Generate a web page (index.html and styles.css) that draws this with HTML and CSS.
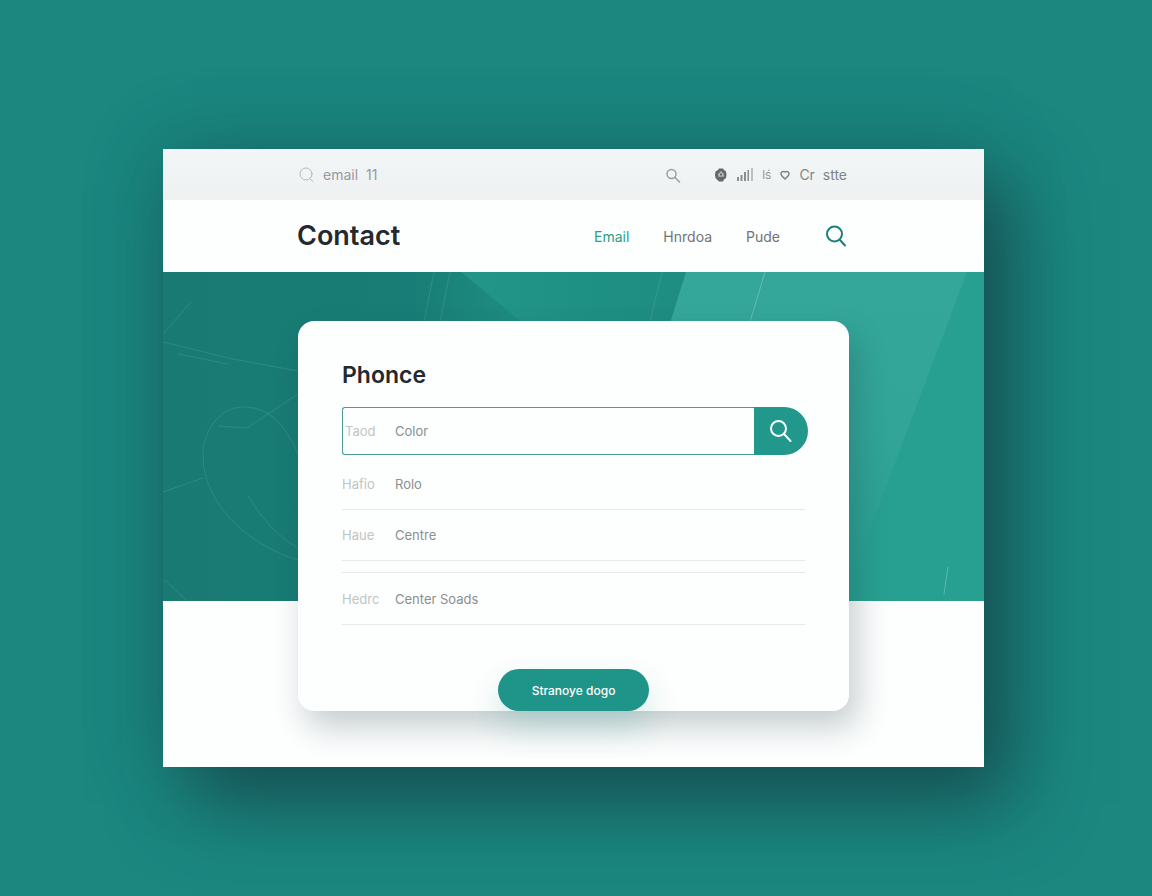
FILE: index.html
```html
<!DOCTYPE html>
<html lang="en">
<head>
  <meta charset="UTF-8">
  <meta name="viewport" content="width=device-width, initial-scale=1">
  <title>Contact</title>
  <link rel="stylesheet" href="styles.css">
</head>
<body>

  <div class="page">

    <div class="topbar">
      <form class="top-search">
        <label for="top-search">
          <svg class="icon-light" width="16" height="16" viewBox="0 0 16 16" aria-label="Search"><circle cx="7" cy="7" r="6"/><path d="M11 12l3 2.500"/></svg>
        </label>
        <input id="top-search" type="text" value="email  11">
        <button type="submit" aria-label="Search">
          <svg class="icon-grey" width="16" height="16" viewBox="0 0 16 16"><circle cx="6.500" cy="7" r="4.500"/><path d="M10 10.500l4.500 4.500"/></svg>
        </button>
      </form>
      <div class="top-info">
        <svg width="14" height="14" viewBox="0 0 14 14"><path fill="#64686a" d="M5 .5h4l1 1.500 2 1.500.5 2.500-.5 4-2 1.500L9 13.500H5L3.500 12 1.500 10 1 7l.5-3.500L4 2z"/><path fill="#b9bdbe" d="M7 3L9.800 6v2.800H4.200V6z"/><path fill="#64686a" d="M6 5.500h2v2H6z"/></svg>
        <svg width="16" height="14" viewBox="0 0 16 14"><path fill="#8a8e90" d="M0 9h2v4H0zM3.500 7h2v6h-2zM7 4h2v9H7zM10.500 2H12v11h-1.500zM14.500 0h1v13h-1z"/></svg>
        <span class="tiny">lś</span>
        <svg class="heart" width="10" height="10" viewBox="0 0 10 10"><path d="M5 9L2 6Q0 3 2 1.800Q3.500 1 5 2Q6.500 1 8 1.800Q10 3 8 6z"/></svg>
        <span class="site">Cr&nbsp; stte</span>
      </div>
    </div>

    <header class="header">
      <h1>Contact</h1>
      <nav>
        <a class="active" href="#">Email</a>
        <a href="#">Hnrdoa</a>
        <a href="#">Pude</a>
      </nav>
      <button type="button" aria-label="Search">
        <svg class="icon-teal" width="22" height="22" viewBox="0 0 22 22"><circle cx="9.500" cy="9" r="7.500"/><path d="M15 15l5 5.500"/></svg>
      </button>
    </header>

    <main class="main">
      <svg class="hero" viewBox="0 0 821 329" preserveAspectRatio="none">
        <defs>
          <linearGradient id="base" x1="0" y1="0" x2="1" y2="0">
            <stop offset="0" stop-color="#187a73"/>
            <stop offset=".3" stop-color="#187d76"/>
            <stop offset=".45" stop-color="#1f8f83"/>
            <stop offset=".6" stop-color="#1e8e82"/>
            <stop offset="1" stop-color="#28a293"/>
          </linearGradient>
          <linearGradient id="beam" x1="0" y1="0" x2="0" y2="1">
            <stop offset="0" stop-color="#35a79a"/>
            <stop offset=".5" stop-color="#32a498"/>
            <stop offset="1" stop-color="#289f91"/>
          </linearGradient>
          <linearGradient id="middle" x1="0" y1="0" x2="1" y2="0">
            <stop offset="0" stop-color="#249689"/>
            <stop offset=".5" stop-color="#1f9084"/>
            <stop offset="1" stop-color="#1e8c81"/>
          </linearGradient>
        </defs>
        <rect width="821" height="329" fill="url(#base)"/>
        <path fill="url(#middle)" d="M298 0h240L500 60H371z"/>
        <path fill="#28a091" d="M804 0h17v329H600z"/>
        <path fill="url(#beam)" d="M523 0h281L680 329H420z"/>
        <g class="lines">
          <path d="M271 0l-12 60M287 0l-12 60M499 0l-12 50"/>
          <path d="M0 70l70 17 65 12M15 82l50 10M0 62l28-32"/>
          <path d="M135 182C119 145 100 134 78 135C55 137 40 160 40 183C40 235 90 275 135 288"/>
          <path d="M135 122L84 156 55 154M0 220l40-14M85 224Q108 262 135 276M2 308l22 21"/>
        </g>
        <path class="line-bright" d="M602 0l-18 60M785 295l-4 27"/>
      </svg>

      <form class="card">
        <h2>Phonce</h2>
        <div class="search-row">
          <div class="field">
            <label for="color">Taod</label>
            <input id="color" type="text" value="Color">
          </div>
          <button type="submit" aria-label="Search">
            <svg class="icon-white" width="24" height="24" viewBox="0 0 24 24"><circle cx="9.500" cy="9.500" r="7.500"/><path d="M15 15l6.500 7"/></svg>
          </button>
        </div>
        <div class="row">
          <label for="role">Hafio</label>
          <input id="role" type="text" value="Rolo">
        </div>
        <div class="row">
          <label for="centre">Haue</label>
          <input id="centre" type="text" value="Centre">
        </div>
        <div class="row row-split">
          <label for="center">Hedrc</label>
          <input id="center" type="text" value="Center Soads">
        </div>
        <div class="actions">
          <button class="btn" type="submit">Stranoye dogo</button>
        </div>
      </form>
    </main>

  </div>

</body>
</html>
```

FILE: styles.css
```css
* {
  box-sizing: border-box;
}

body {
  margin: 0;
  padding: 149px 168px 129px 163px;
  background: #1b877f;
  font-family: Inter, "Liberation Sans", sans-serif;
  font-size: 14px;
  color: #6f7476;
}

svg {
  display: block;
  fill: none;
  stroke-linecap: round;
}

button {
  display: flex;
  align-items: center;
  justify-content: center;
  padding: 0;
  border: none;
  background: none;
  font-family: inherit;
  cursor: pointer;
}

input {
  flex: 1;
  min-width: 0;
  padding: 0;
  border: none;
  outline: none;
  background: none;
  font-family: inherit;
  font-size: 13px;
  color: #8a8f91;
}

.page {
  background: #fdfefe;
  box-shadow: 28px 36px 72px rgba(20, 50, 60, 0.6), 0 0 72px rgba(20, 60, 65, 0.25);
}

.icon-light { stroke: #b4babb; }
.icon-grey { stroke: #9a9fa0; stroke-width: 1.5; }
.icon-teal { stroke: #1e8078; stroke-width: 2; }
.icon-white { stroke: #fff; stroke-width: 2; }

/* top bar */
.topbar {
  display: flex;
  align-items: center;
  justify-content: space-between;
  height: 51px;
  padding: 0 137px 0 136px;
  background: linear-gradient(#f2f6f7, #eff1f1);
}

.top-search {
  display: flex;
  align-items: center;
  gap: 8px;
  width: 382px;
}

.top-search input {
  font-size: 14px;
  color: #969b9c;
}

.top-info {
  display: flex;
  align-items: center;
  gap: 9px;
}

.tiny {
  font-size: 12px;
  color: #929798;
}

.heart {
  stroke: #7f8486;
  stroke-width: 1.5;
}

.site {
  color: #7f8486;
}

/* header */
.header {
  display: flex;
  align-items: center;
  height: 72px;
  padding: 0 137px 0 134px;
}

h1 {
  flex: 1;
  margin: 0;
  font-size: 27px;
  font-weight: 600;
  line-height: 32px;
  color: #25292b;
}

nav {
  display: flex;
  gap: 34px;
  margin-right: 45px;
}

nav a {
  color: #6f7476;
  text-decoration: none;
}

nav .active {
  color: #26a088;
}

/* hero and form card */
.main {
  position: relative;
  padding: 49px 135px 56px;
}

.hero {
  position: absolute;
  top: 0;
  left: 0;
  width: 100%;
  height: 329px;
}

.lines {
  stroke: #8fc4c0;
  stroke-opacity: 0.2;
}

.line-bright {
  stroke: #a5ddd5;
  stroke-opacity: 0.4;
}

.card {
  position: relative;
  padding: 38px 41px 0 44px;
  border-radius: 16px;
  background: #fdfefe;
  box-shadow: 8px 16px 32px rgba(20, 50, 60, 0.24);
}

h2 {
  margin: 0 0 16px;
  font-size: 23px;
  font-weight: 600;
  line-height: 32px;
  color: #25292e;
}

.search-row {
  display: flex;
  height: 48px;
  margin-bottom: 4px;
}

.field {
  display: flex;
  flex: 1;
  align-items: center;
  padding-left: 2px;
  border: 1px solid #4a9c95;
  border-right: none;
  border-radius: 3px 0 0 3px;
}

.search-row button {
  width: 54px;
  border-radius: 0 24px 24px 0;
  background: #22978b;
}

.field label {
  width: 50px;
}

label {
  font-size: 13px;
  color: #c0c5c6;
}

.row {
  display: flex;
  align-items: center;
  height: 51px;
  margin-right: 3px;
  border-bottom: 1px solid #e6e9ea;
}

.row label {
  width: 53px;
}

.row-split {
  height: 53px;
  margin-top: 11px;
  border-top: 1px solid #e6e9ea;
}

.actions {
  display: flex;
  justify-content: center;
  margin: 44px 3px 0 0;
}

.btn {
  width: 151px;
  height: 42px;
  border-radius: 21px;
  background: #1f9488;
  box-shadow: 0 16px 32px rgba(31, 148, 136, 0.2);
  font-size: 12px;
  font-weight: 500;
  color: #fff;
}
```
